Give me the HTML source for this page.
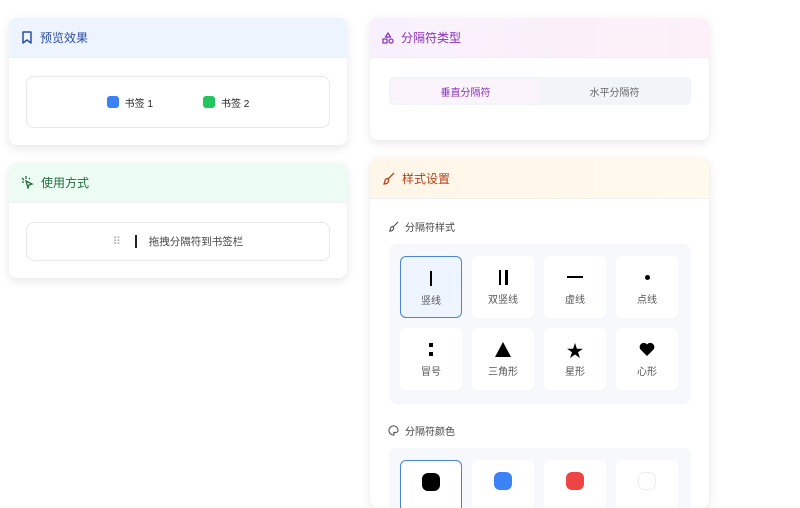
<!DOCTYPE html>
<html><head><meta charset="utf-8"><style>
*{box-sizing:border-box;margin:0;padding:0}
body{width:800px;height:494px;overflow:hidden;background:#fff;font-family:"Liberation Sans","Noto Sans CJK SC",sans-serif;font-size:11px;color:#333;position:relative}
.card{position:absolute;background:#fff;border-radius:8px;box-shadow:0 3px 10px rgba(0,0,0,.1);overflow:hidden}
.hd{height:40px;border-bottom:1px solid #eef0f3;display:flex;align-items:center;padding-left:12px;font-size:12px}
.hd svg{margin-right:7px}
.box{position:absolute;border:1px solid #e6e8ec;border-radius:8px;display:flex;align-items:center;justify-content:center}
.it{position:absolute;width:62px;height:62px;background:#fff;border-radius:6px;text-align:center;font-size:10px;color:#555}
.it .g{height:30px;padding-top:12px;display:flex;justify-content:center;align-items:center;font-size:17px;color:#000;margin-bottom:5px}
.sel{border:1.5px solid #4a85d6;background:#eef5ff}
.lab{position:absolute;font-size:10px;color:#444;display:flex;align-items:center}
</style></head><body>

<div class="card" style="left:9px;top:18px;width:338px;height:127px">
 <div class="hd" style="background:#eef4fe;color:#2c4ea0"><svg width="12" height="13" viewBox="0 0 12 13"><path d="M2 1h8v11L6 9 2 12z" fill="none" stroke="#2c4ea0" stroke-width="1.5" stroke-linejoin="round"/></svg>预览效果</div>
 <div class="box" style="left:17px;top:58px;width:304px;height:52px;font-size:10px;color:#222">
  <span style="width:12px;height:12px;background:#3b82f6;border-radius:3px;margin-right:6px"></span>书签 1
  <span style="width:12px;height:12px;background:#22c55e;border-radius:3px;margin:0 6px 0 50px"></span>书签 2
 </div>
</div>

<div class="card" style="left:9px;top:163px;width:338px;height:115px">
 <div class="hd" style="background:#edfcf3;color:#1f6b3f"><svg width="13" height="13" viewBox="0 0 13 13"><path d="M1 2l2 2M5 0v3M9 2L8 3M1 6h2M5 5l6 3-3 1-1 3z" fill="none" stroke="#1f6b3f" stroke-width="1.3"/></svg>使用方式</div>
 <div class="box" style="left:17px;top:59px;width:304px;height:39px;font-size:10.5px;color:#444">
  <span style="color:#aaa;font-size:11px;margin-right:14px">⠿</span><span style="width:2px;height:13px;background:#222;margin-right:12px"></span>拖拽分隔符到书签栏
 </div>
</div>

<div class="card" style="left:370px;top:18px;width:339px;height:122px">
 <div class="hd" style="background:linear-gradient(90deg,#f8f1fd,#fdf0f8);color:#8a2fb5"><svg width="12" height="12" viewBox="0 0 12 12"><path d="M6 1L3.5 5h5z" fill="none" stroke="#8a2fb5" stroke-width="1.2"/><rect x="1" y="7" width="4" height="4" fill="none" stroke="#8a2fb5" stroke-width="1.2"/><circle cx="9" cy="9" r="2" fill="none" stroke="#8a2fb5" stroke-width="1.2"/></svg>分隔符类型</div>
 <div style="position:absolute;left:19px;top:59px;width:302px;height:28px;background:#f1f4f8;border-radius:5px;display:flex;padding:2px;font-size:10px">
  <div style="flex:1;background:#fbf4fd;border-radius:4px;display:flex;align-items:center;justify-content:center;color:#8a2fb5">垂直分隔符</div>
  <div style="flex:1;display:flex;align-items:center;justify-content:center;color:#666">水平分隔符</div>
 </div>
</div>

<div class="card" style="left:370px;top:158px;width:339px;height:350px">
 <div class="hd" style="height:41px;background:linear-gradient(90deg,#fff6ea,#fffaeb);color:#b4431b"><svg width="13" height="13" viewBox="0 0 13 13"><path d="M12 1L6 7M6 7c-1-1-3 0-3 2l-1 3c2 0 4-1 4-2 1-1 1-2 0-3z" fill="none" stroke="#b4431b" stroke-width="1.3"/></svg>样式设置</div>
 <div class="lab" style="left:18px;top:61px"><svg width="11" height="11" viewBox="0 0 13 13" style="margin-right:6px"><path d="M12 1L6 7M6 7c-1-1-3 0-3 2l-1 3c2 0 4-1 4-2 1-1 1-2 0-3z" fill="none" stroke="#444" stroke-width="1.2"/></svg>分隔符样式</div>
 <div style="position:absolute;left:19px;top:86px;width:302px;height:160px;background:#f6f8fb;border-radius:8px"></div>
 <div class="it sel" style="left:30px;top:98px"><div class="g"><span style="width:2.5px;height:15px;background:#000"></span></div>竖线</div>
 <div class="it" style="left:102px;top:98px"><div class="g"><span style="width:2.5px;height:15px;background:#000;margin-right:4px"></span><span style="width:2.5px;height:15px;background:#000"></span></div>双竖线</div>
 <div class="it" style="left:174px;top:98px"><div class="g"><span style="width:16px;height:2.5px;background:#000"></span></div>虚线</div>
 <div class="it" style="left:246px;top:98px"><div class="g"><span style="width:5px;height:5px;background:#000;border-radius:50%"></span></div>点线</div>
 <div class="it" style="left:30px;top:170px"><div class="g"><span style="display:flex;flex-direction:column;gap:5px"><i style="width:4px;height:4px;background:#000;display:block"></i><i style="width:4px;height:4px;background:#000;display:block"></i></span></div>冒号</div>
 <div class="it" style="left:102px;top:170px"><div class="g"><svg width="16" height="15" viewBox="0 0 16 15"><path d="M8 0L16 15H0z" fill="#000"/></svg></div>三角形</div>
 <div class="it" style="left:174px;top:170px"><div class="g">★</div>星形</div>
 <div class="it" style="left:246px;top:170px"><div class="g"><svg width="16" height="14" viewBox="0 0 16 14"><path d="M8 14L1.5 7.5A4 4 0 018 2.5a4 4 0 016.5 5z" fill="#000"/></svg></div>心形</div>
 <div class="lab" style="left:18px;top:265px"><svg width="11" height="11" viewBox="0 0 12 12" style="margin-right:6px"><path d="M6 1a5 5 0 100 10c1 0 1-1 .5-1.5S6 8 7 8h2a2 2 0 002-2c0-3-2-5-5-5z" fill="none" stroke="#444" stroke-width="1.1"/></svg>分隔符颜色</div>
 <div style="position:absolute;left:19px;top:290px;width:302px;height:80px;background:#f6f8fb;border-radius:8px"></div>
 <div class="it sel" style="left:30px;top:302px;background:#fff"><div class="g"><span style="width:18px;height:18px;background:#000;border-radius:6px"></span></div></div>
 <div class="it" style="left:102px;top:302px"><div class="g"><span style="width:18px;height:18px;background:#3b82f6;border-radius:6px"></span></div></div>
 <div class="it" style="left:174px;top:302px"><div class="g"><span style="width:18px;height:18px;background:#ef4444;border-radius:6px"></span></div></div>
 <div class="it" style="left:246px;top:302px"><div class="g"><span style="width:18px;height:18px;background:#fff;border:1px solid #eee;border-radius:6px"></span></div></div>
</div>
</body></html>
